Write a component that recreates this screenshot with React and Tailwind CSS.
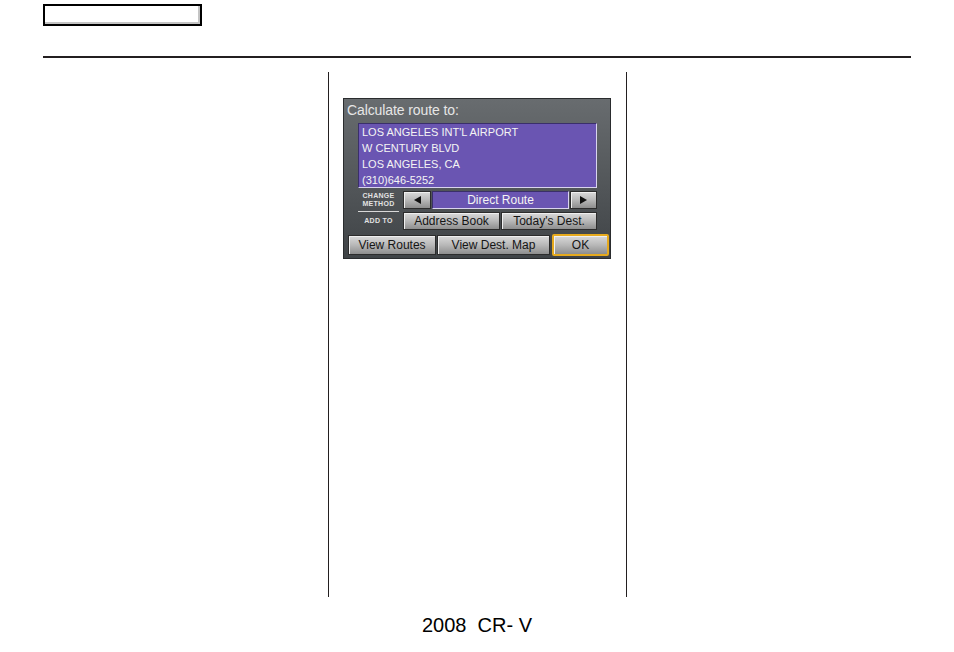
import React from 'react'

const btn =
  'flex items-center justify-center border border-[#2c2c2c] bg-gradient-to-b from-[#dadada] via-[#b8b8b8] to-[#8e8e8e] text-[12px] leading-none text-[#151515] shadow-[inset_1px_1px_0_#efefef]'

function Arrow({ dir }) {
  return (
    <svg width="7" height="8" viewBox="0 0 7 8">
      {dir === 'left' ? <polygon points="7,0 7,8 0,4" fill="#111" /> : <polygon points="0,0 0,8 7,4" fill="#111" />}
    </svg>
  )
}

function NavScreen() {
  return (
    <div className="w-[268px] h-[161px] border border-[#2a2c2e] bg-gradient-to-b from-[#686c6f] via-[#54585b] to-[#3f4346] pt-[3px] pl-[3px] font-['Liberation_Sans',Arial,sans-serif]">
      <div className="text-[14px] leading-[16px] text-[#e6e6e6] tracking-[-0.1px]">Calculate route to:</div>

      {/* address */}
      <div className="ml-[11px] mt-[5px] w-[239px] h-[65px] bg-[#6a55b2] border border-[#3a2f6a] border-r-[#d9d4ee] border-b-[#d9d4ee] pl-[3px] text-[11px] leading-[16px] text-[#f4f4f4]">
        <div>LOS ANGELES INT'L AIRPORT</div>
        <div>W CENTURY BLVD</div>
        <div>LOS ANGELES, CA</div>
        <div>(310)646-5252</div>
      </div>

      {/* change method */}
      <div className="ml-[11px] mt-[3px] flex items-start h-[21px]">
        <div className="w-[41px] h-[21px] border-b border-[#d8d8d8] flex flex-col items-center pt-[1px] text-[7px] leading-[8px] font-bold text-[#e2e2e2] tracking-[0.3px]">
          <span>CHANGE</span>
          <span>METHOD</span>
        </div>
        <div className={btn + ' ml-[4px] w-[28px] h-[18px]'}>
          <Arrow dir="left" />
        </div>
        <div className="ml-[1px] w-[137px] h-[18px] bg-[#6a55b2] border border-[#3a2f6a] border-r-[#d9d4ee] border-b-[#d9d4ee] flex items-center justify-center text-[12px] text-[#f4f4f4]">
          Direct Route
        </div>
        <div className={btn + ' ml-[1px] w-[27px] h-[18px]'}>
          <Arrow dir="right" />
        </div>
      </div>

      {/* add to */}
      <div className="ml-[11px] flex items-center h-[18px]">
        <div className="w-[41px] text-center text-[7px] leading-[8px] font-bold text-[#e2e2e2] tracking-[0.3px]">ADD TO</div>
        <div className={btn + ' ml-[4px] w-[97px] h-[18px]'}>Address Book</div>
        <div className={btn + ' ml-[1px] w-[96px] h-[18px]'}>Today's Dest.</div>
      </div>

      {/* bottom buttons */}
      <div className="ml-[1px] mt-[4px] flex items-center">
        <div className={btn + ' w-[88px] h-[20px]'}>View Routes</div>
        <div className={btn + ' ml-[1px] w-[113px] h-[20px]'}>View Dest. Map</div>
        <div className={btn + ' ml-[2px] w-[57px] h-[22px] border-2 border-[#e6aa1e] rounded-[2px]'}>OK</div>
      </div>
    </div>
  )
}

export default function App() {
  return (
    <div className="w-[954px] h-[652px] bg-white pt-[4px] flex flex-col font-['Liberation_Sans',Arial,sans-serif] text-black">
      <div className="ml-[43px] w-[159px] h-[22px] border-2 border-black shadow-[inset_-2px_-2px_0_#c4c4c4]" />
      <div className="ml-[43px] mt-[30px] w-[868px] h-[2px] bg-[#231f20]" />

      <div className="mt-[14px] flex h-[525px]">
        <div className="w-[328px]" />
        <div className="w-[299px] border-l border-r border-[#231f20] pl-[14px] pt-[26px]">
          <NavScreen />
        </div>
        <div className="flex-1" />
      </div>

      <div className="mt-[17px] text-center text-[20px] leading-[22px] whitespace-pre">2008  CR- V</div>
    </div>
  )
}
